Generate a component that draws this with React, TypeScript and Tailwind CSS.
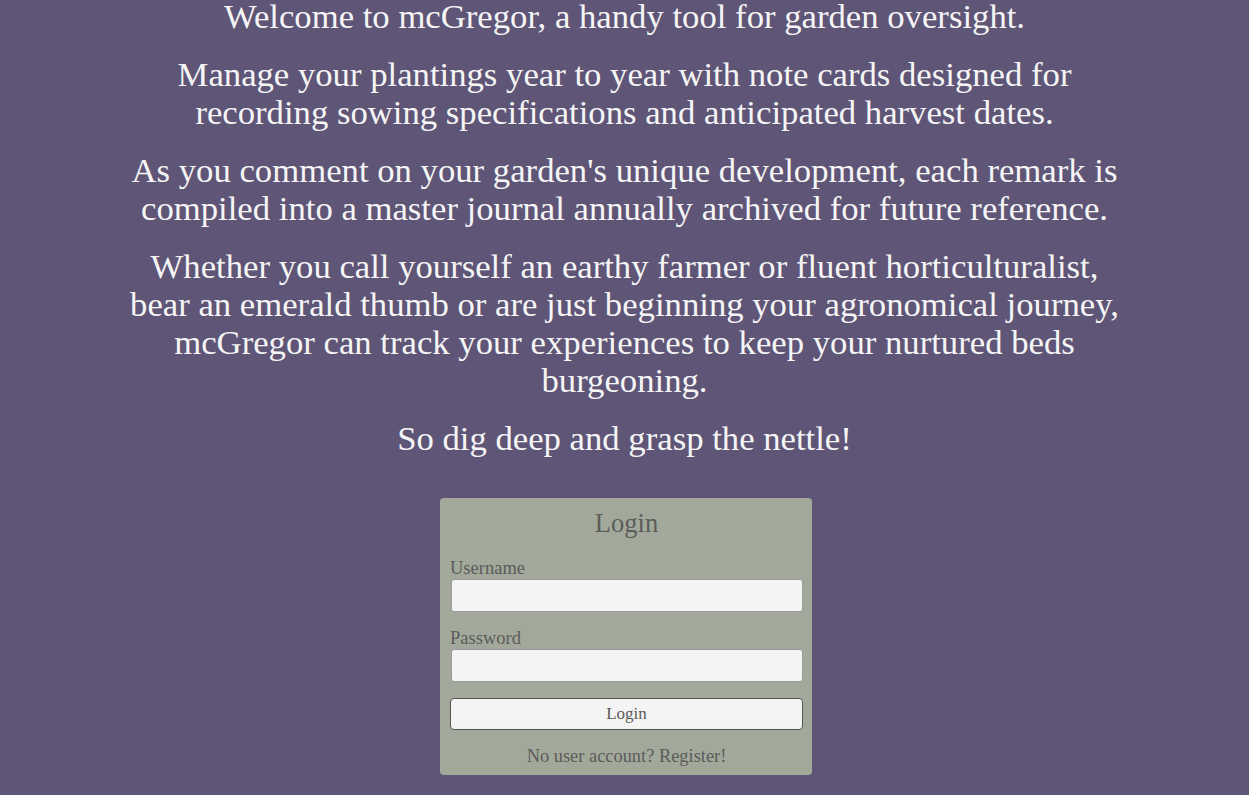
import React from "react";

export default function App() {
  return (
    <div
      className="min-h-[795px] w-full bg-[#5f5577] text-[#f5f5f5] overflow-hidden"
      style={{ fontFamily: '"Liberation Serif", "DejaVu Serif", serif' }}
    >
      <div className="mx-auto w-[1100px] text-center text-[34.7px] leading-[38px] mt-[-2px]">
        <p className="mb-[20px]">Welcome to mcGregor, a handy tool for garden oversight.</p>
        <p className="mb-[20px]">
          Manage your plantings year to year with note cards designed for
          <br />
          recording sowing specifications and anticipated harvest dates.
        </p>
        <p className="mb-[20px]">
          As you comment on your garden's unique development, each remark is
          <br />
          compiled into a master journal annually archived for future reference.
        </p>
        <p className="mb-[20px]">
          Whether you call yourself an earthy farmer or fluent horticulturalist,
          <br />
          bear an emerald thumb or are just beginning your agronomical journey,
          <br />
          mcGregor can track your experiences to keep your nurtured beds
          <br />
          burgeoning.
        </p>
        <p>So dig deep and grasp the nettle!</p>
      </div>
      <div className="mt-[40px] flex justify-center pl-[3px]">
        <div className="w-[372px] rounded-[4px] bg-[#a3a99a] pl-[10px] pr-[9px] pb-[9px] pt-[9px] text-[#5b5b5b]">
          <h2 className="text-center text-[26.5px] leading-[32px]">Login</h2>
          <div className="mt-[19px]">
            <label className="block text-[18.5px] leading-[20px]">Username</label>
            <input
              type="text"
              className="mt-[1px] ml-[1px] block h-[33px] w-[352px] rounded-[3px] border border-[#9a9a9a] bg-[#f4f4f4] outline-none"
            />
          </div>
          <div className="mt-[16px]">
            <label className="block text-[18.5px] leading-[20px]">Password</label>
            <input
              type="password"
              className="mt-[1px] ml-[1px] block h-[33px] w-[352px] rounded-[3px] border border-[#9a9a9a] bg-[#f4f4f4] outline-none"
            />
          </div>
          <button className="mt-[16px] block h-[32px] w-[353px] rounded-[4px] border border-[#555] bg-[#f4f4f4] text-[17px] leading-[20px] text-[#5b5b5b]">
            Login
          </button>
          <p className="mt-[16px] text-center text-[18.4px] leading-[20px]">No user account? Register!</p>
        </div>
      </div>
    </div>
  );
}
